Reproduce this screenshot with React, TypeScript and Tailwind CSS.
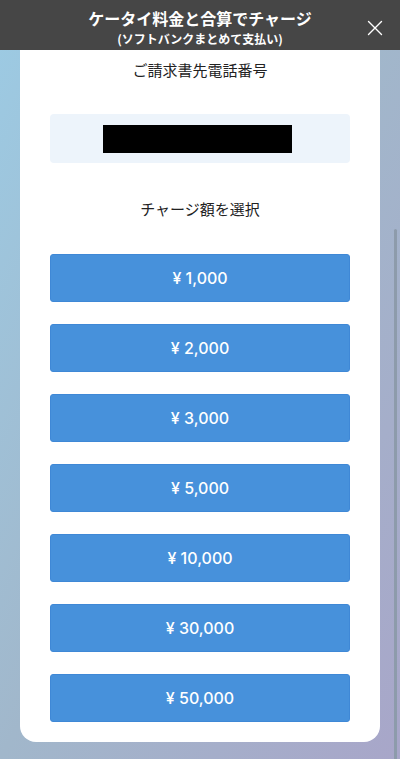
const amounts = ['1,000', '2,000', '3,000', '5,000', '10,000', '30,000', '50,000']

export default function App() {
  return (
    <div
      className="relative w-[400px] h-[759px] overflow-hidden bg-gradient-to-br from-[#9ccbe4] via-[#a1b7cb] to-[#a8a6c9]"
      style={{ fontFamily: '"Noto Sans CJK JP", "Noto Sans", sans-serif' }}
    >
      {/* header */}
      <div className="relative h-[50px] bg-[#464646] flex flex-col items-center pt-[7px] text-white">
        <div className="text-[16px] font-bold leading-[22px]">ケータイ料金と合算でチャージ</div>
        <div className="text-[12px] font-bold leading-[15px] mt-[2px]">(ソフトバンクまとめて支払い)</div>
        <button className="absolute right-[17px] top-[20px] w-[16px] h-[16px]">
          <svg viewBox="0 0 16 16" className="w-[16px] h-[16px]" fill="none" stroke="white" strokeWidth="1.4" strokeLinecap="round">
            <path d="M1.5 1.5 L14.5 14.5 M14.5 1.5 L1.5 14.5" />
          </svg>
        </button>
      </div>

      {/* card */}
      <div className="mx-[20px] bg-white rounded-b-[16px] px-[30px] pb-[20px]">
        <div className="pt-[10px] text-center text-[15px] leading-[20px] text-[#222]">ご請求書先電話番号</div>
        <div className="mt-[34px] h-[49px] bg-[#edf4fb] rounded-[4px] flex items-center justify-center">
          <div className="w-[189px] h-[28px] bg-black ml-[-6px]" />
        </div>
        <div className="mt-[36px] text-center text-[15px] leading-[20px] text-[#222]">チャージ額を選択</div>
        <div className="mt-[35px] flex flex-col gap-[22px]">
          {amounts.map((a) => (
            <button
              key={a}
              className="h-[48px] w-full rounded-[3px] bg-[#4791db] border border-[#3f88d6] text-white text-[16px] font-medium flex items-center justify-center"
              style={{ fontFamily: 'Inter, "Noto Sans CJK JP", sans-serif' }}
            >
              ¥ {a}
            </button>
          ))}
        </div>
      </div>

      {/* scrollbar */}
      <div className="absolute right-[3px] top-[229px] w-[3px] h-[540px] rounded-full bg-[#8d9bab]" />
    </div>
  )
}
